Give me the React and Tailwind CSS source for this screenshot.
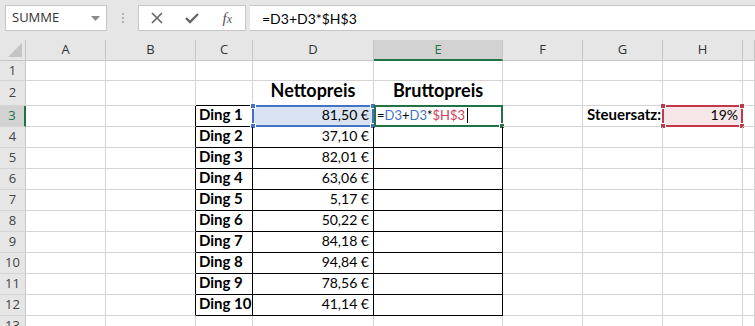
import React from "react";

const W = [26, 80, 90, 57, 121, 129, 80, 80, 80];
const cellFont = { fontFamily: "Lato, 'Open Sans', sans-serif" };

function Handle({ cls, pos }) {
  return <div className={`absolute w-[6px] h-[6px] border border-white ${cls} ${pos}`} />;
}

const euro = ["81,50 €", "37,10 €", "82,01 €", "63,06 €", "5,17 €", "50,22 €", "84,18 €", "94,84 €", "78,56 €", "41,14 €"];

function Row({ h, children }) {
  return (
    <div className="flex" style={{ height: h }}>
      {children}
    </div>
  );
}

export default function App() {
  const rows = [];
  const heights = { 1: 20, 2: 25 };
  for (let r = 1; r <= 13; r++) {
    const h = heights[r] || 21;
    const inTable = r >= 3 && r <= 12;
    const sel = r === 3;
    const cells = [];
    cells.push(
      <div
        key="rh"
        className={`shrink-0 flex items-center justify-center text-[13px] border-b border-b-[#d4d4d4] ${
          sel ? "bg-[#d2d2d2] border-r-2 border-r-[#217346] text-[#217346]" : "bg-[#e6e6e6] border-r border-r-[#c6c6c6] text-[#444]"
        }`}
        style={{ width: 26, fontFamily: "'Open Sans', 'Noto Sans', sans-serif" }}
      >
        {r}
      </div>
    );
    for (let c = 1; c <= 9; c++) {
      const w = c < 9 ? W[c] : undefined;
      const tableCell = inTable && c >= 3 && c <= 5;
      let br = "border-r-[#d4d4d4]";
      let bb = "border-b-[#d4d4d4]";
      if (tableCell) {
        br = "border-r-black";
        bb = "border-b-black";
      }
      if (inTable && c === 2) br = "border-r-black";
      if (r === 2 && c >= 3 && c <= 5) bb = "border-b-black";
      let content = null;
      let extra = "";
      if (r === 2 && c === 4)
        content = <div className="w-full text-center font-bold text-[18px] text-black">Nettopreis</div>;
      if (r === 2 && c === 5)
        content = <div className="w-full text-center font-bold text-[18px] text-black">Bruttopreis</div>;
      if (inTable && c === 3)
        content = <div className="pl-[3px] font-bold text-[15px] text-black">{`Ding ${r - 2}`}</div>;
      if (inTable && c === 4)
        content = <div className="w-full text-right pr-[4px] text-[14px] text-black">{euro[r - 3]}</div>;
      if (sel && c === 4) extra = "bg-[#d9e3f3]";
      if (sel && c === 7)
        content = <div className="w-full text-right pr-[1px] font-bold text-[15px] text-black">Steuersatz:</div>;
      if (sel && c === 8) extra = "bg-[#f7e6e7]";
      cells.push(
        <div
          key={c}
          className={`relative flex items-end pb-[1px] border-r border-b ${br} ${bb} ${c === 9 ? "flex-1" : "shrink-0"} ${extra}`}
          style={{ width: w }}
        >
          {content}
          {sel && c === 4 && (
            <>
              <div className="absolute -left-[1px] -top-[1px] -right-[1px] -bottom-[1px] border-2 border-[#4472c4]" />
              <Handle cls="bg-[#4472c4]" pos="-left-[3px] -top-[3px]" />
              <Handle cls="bg-[#4472c4]" pos="-right-[3px] -top-[3px]" />
              <Handle cls="bg-[#4472c4]" pos="-left-[3px] -bottom-[3px]" />
              <Handle cls="bg-[#4472c4]" pos="-right-[3px] -bottom-[3px]" />
            </>
          )}
          {sel && c === 5 && (
            <>
              <div className="absolute left-0 -top-[1px] -right-[1px] -bottom-[1px] border-2 border-[#217346]" />
              <div className="absolute -right-[3px] -bottom-[3px] w-[6px] h-[6px] bg-[#217346] border border-white" />
              <div className="relative pl-[3px] text-[13px] flex items-end">
                <span className="text-black">=</span>
                <span className="text-[#4472c4]">D3</span>
                <span className="text-black">+</span>
                <span className="text-[#4472c4]">D3</span>
                <span className="text-black">*</span>
                <span className="text-[#d0405a]">$H$3</span>
                <span className="inline-block w-[1px] h-[15px] bg-black ml-[2px] mb-[2px]" />
              </div>
            </>
          )}
          {sel && c === 8 && (
            <>
              <div className="absolute -left-[1px] -top-[1px] -right-[1px] -bottom-[1px] border-2 border-[#c0394a]" />
              <Handle cls="bg-[#c0394a]" pos="-left-[3px] -top-[3px]" />
              <Handle cls="bg-[#c0394a]" pos="-right-[3px] -top-[3px]" />
              <Handle cls="bg-[#c0394a]" pos="-left-[3px] -bottom-[3px]" />
              <Handle cls="bg-[#c0394a]" pos="-right-[3px] -bottom-[3px]" />
              <div className="relative w-full text-right pr-[4px] text-[14px] text-black">19%</div>
            </>
          )}
        </div>
      );
    }
    rows.push(
      <Row key={r} h={h}>
        {cells}
      </Row>
    );
  }

  const letters = ["A", "B", "C", "D", "E", "F", "G", "H", ""];

  return (
    <div className="w-[755px] h-[326px] overflow-hidden bg-[#e6e6e6]" style={cellFont}>
      <div className="h-[40px] flex items-start pt-[5px]" style={{ fontFamily: "'Open Sans', 'Noto Sans', sans-serif" }}>
        <div className="ml-[5px] w-[102px] h-[26px] bg-white border border-[#c6c6c6] flex items-center justify-between pl-[6px] pr-[6px]">
          <span className="text-[13px] text-[#333]">SUMME</span>
          <svg width="9" height="5" viewBox="0 0 9 5">
            <path d="M0 0 H9 L4.5 5 Z" fill="#8a8a8a" />
          </svg>
        </div>
        <div className="w-[31px] h-[26px] flex flex-col items-center justify-center gap-[2px]">
          <div className="w-[2px] h-[2px] bg-[#b0b0b0]" />
          <div className="w-[2px] h-[2px] bg-[#b0b0b0]" />
          <div className="w-[2px] h-[2px] bg-[#b0b0b0]" />
        </div>
        <div className="w-[108px] h-[26px] bg-white border border-[#c6c6c6] flex items-center">
          <div className="w-[36px] flex justify-center">
            <svg width="12" height="12" viewBox="0 0 12 12">
              <path d="M1 1 L11 11 M11 1 L1 11" stroke="#666" strokeWidth="1.6" />
            </svg>
          </div>
          <div className="w-[36px] flex justify-center">
            <svg width="14" height="12" viewBox="0 0 14 12">
              <path d="M1 6 L5 10 L13 2" stroke="#666" strokeWidth="2.4" fill="none" />
            </svg>
          </div>
          <div className="w-[36px] flex justify-center">
            <span className="text-[#555] italic text-[15px]" style={{ fontFamily: "'Liberation Serif', serif" }}>
              f<span className="text-[12px]">x</span>
            </span>
          </div>
        </div>
        <div className="ml-[4px] flex-1 h-[26px] bg-white border-y border-[#c6c6c6] flex items-center pl-[12px]">
          <span className="text-[14px] text-black" style={{ fontFamily: "Lato, sans-serif" }}>=D3+D3*$H$3</span>
        </div>
      </div>
      <div className="flex h-[21px]" style={{ fontFamily: "'Open Sans', 'Noto Sans', sans-serif" }}>
        <div className="w-[26px] shrink-0 relative border-r border-b border-[#c6c6c6] bg-[#e6e6e6]">
          <svg className="absolute right-[3px] bottom-[3px]" width="14" height="14" viewBox="0 0 14 14">
            <path d="M14 0 V14 H0 Z" fill="#c4c4c4" />
          </svg>
        </div>
        {letters.map((l, i) => {
          const selc = l === "E";
          return (
            <div
              key={i}
              className={`flex items-center justify-center text-[13px] border-r border-r-[#c6c6c6] ${
                selc ? "bg-[#d2d2d2] text-[#217346] border-b-2 border-b-[#217346]" : "bg-[#e6e6e6] text-[#333] border-b border-b-[#c6c6c6]"
              } ${i === 8 ? "flex-1" : "shrink-0"}`}
              style={{ width: i < 8 ? W[i + 1] : undefined }}
            >
              {l}
            </div>
          );
        })}
      </div>
      <div className="bg-white">{rows}</div>
    </div>
  );
}
